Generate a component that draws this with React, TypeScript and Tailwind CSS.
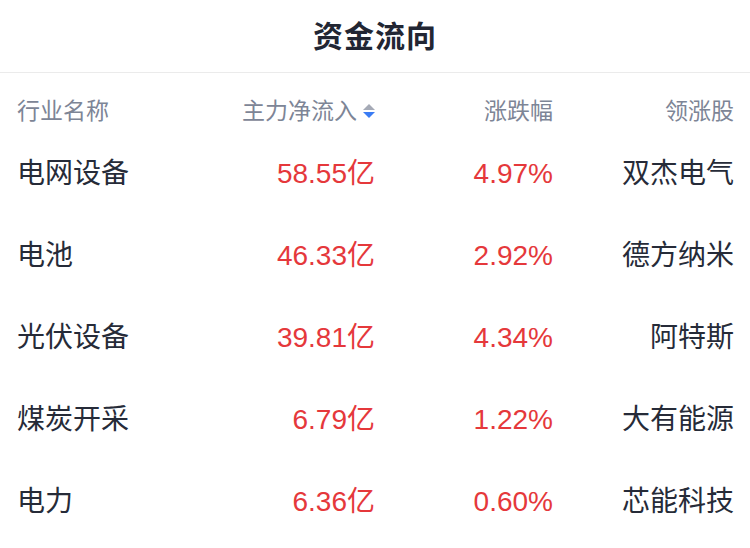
import React from 'react';

const rows = [
  { name: '电网设备', flow: '58.55亿', change: '4.97%', leader: '双杰电气' },
  { name: '电池', flow: '46.33亿', change: '2.92%', leader: '德方纳米' },
  { name: '光伏设备', flow: '39.81亿', change: '4.34%', leader: '阿特斯' },
  { name: '煤炭开采', flow: '6.79亿', change: '1.22%', leader: '大有能源' },
  { name: '电力', flow: '6.36亿', change: '0.60%', leader: '芯能科技' },
];

const cjk = "font-['Liberation_Sans','Noto_Sans_CJK_SC',sans-serif]";

const SortIcon = () => (
  <svg width="12" height="15" viewBox="0 0 12 15" className="ml-[6px]">
    <path d="M6 0 L12 6 L0 6 Z" fill="#a5aab6" />
    <path d="M0 8 L12 8 L6 14 Z" fill="#3b7cf4" />
  </svg>
);

export default function App() {
  return (
    <div className={`w-[750px] h-[548px] bg-white overflow-hidden ${cjk}`}>
      <div className="h-[73px] flex items-center justify-center border-b border-[#ebebeb] pt-[2px]">
        <h1 className="text-[30px] leading-none font-semibold text-[#222633] tracking-[1px]">资金流向</h1>
      </div>

      <div className="grid grid-cols-[160px_198px_178px_181px] pl-[17px] h-[60px] pt-[16px] items-center text-[23px] leading-none text-[#7d8596]">
        <span>行业名称</span>
        <span className="flex items-center justify-end">
          主力净流入
          <SortIcon />
        </span>
        <span className="text-right">涨跌幅</span>
        <span className="text-right">领涨股</span>
      </div>

      {rows.map((r) => (
        <div
          key={r.name}
          className="grid grid-cols-[160px_198px_178px_181px] pl-[17px] h-[82px] items-center text-[28px] leading-none"
        >
          <span className="text-[#262b38]">{r.name}</span>
          <span className="text-right text-[#e5383b]">{r.flow}</span>
          <span className="text-right text-[#e5383b]">{r.change}</span>
          <span className="text-right text-[#262b38]">{r.leader}</span>
        </div>
      ))}
    </div>
  );
}
